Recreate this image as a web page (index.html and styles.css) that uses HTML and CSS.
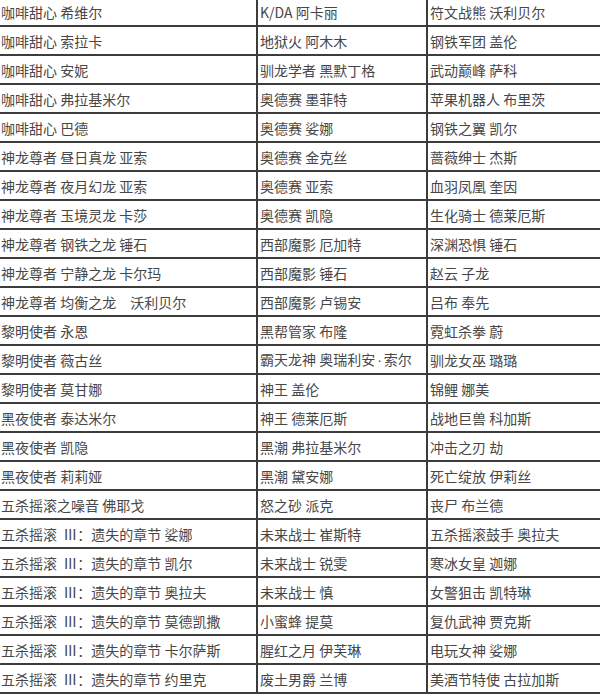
FILE: index.html
```html
<!DOCTYPE html>
<html lang="zh">
<head>
<meta charset="utf-8">
<title>皮肤列表</title>
<link rel="stylesheet" href="styles.css">
</head>
<body>
<table class="skins">
<colgroup><col class="c1"><col class="c2"><col class="c3"></colgroup>
<tbody>
<tr><td>咖啡甜心 希维尔</td><td>K/DA 阿卡丽</td><td>符文战熊 沃利贝尔</td></tr>
<tr><td>咖啡甜心 索拉卡</td><td>地狱火 阿木木</td><td>钢铁军团 盖伦</td></tr>
<tr><td>咖啡甜心 安妮</td><td>驯龙学者 黑默丁格</td><td>武动巅峰 萨科</td></tr>
<tr><td>咖啡甜心 弗拉基米尔</td><td>奥德赛 墨菲特</td><td>苹果机器人 布里茨</td></tr>
<tr><td>咖啡甜心 巴德</td><td>奥德赛 娑娜</td><td>钢铁之翼 凯尔</td></tr>
<tr><td>神龙尊者 昼日真龙 亚索</td><td>奥德赛 金克丝</td><td>蔷薇绅士 杰斯</td></tr>
<tr><td>神龙尊者 夜月幻龙 亚索</td><td>奥德赛 亚索</td><td>血羽凤凰 奎因</td></tr>
<tr><td>神龙尊者 玉境灵龙 卡莎</td><td>奥德赛 凯隐</td><td>生化骑士 德莱厄斯</td></tr>
<tr><td>神龙尊者 钢铁之龙 锤石</td><td>西部魔影 厄加特</td><td>深渊恐惧 锤石</td></tr>
<tr><td>神龙尊者 宁静之龙 卡尔玛</td><td>西部魔影 锤石</td><td>赵云 子龙</td></tr>
<tr><td>神龙尊者 均衡之龙　沃利贝尔</td><td>西部魔影 卢锡安</td><td>吕布 奉先</td></tr>
<tr><td>黎明使者 永恩</td><td>黑帮管家 布隆</td><td>霓虹杀拳 蔚</td></tr>
<tr><td>黎明使者 薇古丝</td><td>霸天龙神 奥瑞利安<span class="dot">·</span>索尔</td><td>驯龙女巫 璐璐</td></tr>
<tr><td>黎明使者 莫甘娜</td><td>神王 盖伦</td><td>锦鲤 娜美</td></tr>
<tr><td>黑夜使者 泰达米尔</td><td>神王 德莱厄斯</td><td>战地巨兽 科加斯</td></tr>
<tr><td>黑夜使者 凯隐</td><td>黑潮 弗拉基米尔</td><td>冲击之刃 劫</td></tr>
<tr><td>黑夜使者 莉莉娅</td><td>黑潮 黛安娜</td><td>死亡绽放 伊莉丝</td></tr>
<tr><td>五杀摇滚之噪音 佛耶戈</td><td>怒之砂 派克</td><td>丧尸 布兰德</td></tr>
<tr><td>五杀摇滚 &nbsp;Ⅲ：遗失的章节 娑娜</td><td>未来战士 崔斯特</td><td>五杀摇滚鼓手 奥拉夫</td></tr>
<tr><td>五杀摇滚 &nbsp;Ⅲ：遗失的章节 凯尔</td><td>未来战士 锐雯</td><td>寒冰女皇 迦娜</td></tr>
<tr><td>五杀摇滚 &nbsp;Ⅲ：遗失的章节 奥拉夫</td><td>未来战士 慎</td><td>女警狙击 凯特琳</td></tr>
<tr><td>五杀摇滚 &nbsp;Ⅲ：遗失的章节 莫德凯撒</td><td>小蜜蜂 提莫</td><td>复仇武神 贾克斯</td></tr>
<tr><td>五杀摇滚 &nbsp;Ⅲ：遗失的章节 卡尔萨斯</td><td>腥红之月 伊芙琳</td><td>电玩女神 娑娜</td></tr>
<tr><td>五杀摇滚 &nbsp;Ⅲ：遗失的章节 约里克</td><td>废土男爵 兰博</td><td>美酒节特使 古拉加斯</td></tr>
</tbody>
</table>
</body>
</html>
```
FILE: styles.css
```css
html, body {
  margin: 0;
  padding: 0;
  background: #ffffff;
  overflow: hidden;
}

.skins {
  border-collapse: collapse;
  table-layout: fixed;
  width: 604px;
  margin: -4px 0 0 -3px;
  font-family: "Noto Sans CJK SC", "Noto Sans", sans-serif;
  font-size: 14px;
  color: #474747;
}

.skins .c1 { width: 259px; }
.skins .c2 { width: 170px; }
.skins .c3 { width: 175px; }

.skins td {
  border: 2px solid #3c3c3c;
  height: 27px;
  padding: 0 0 0 2px;
  line-height: 20px;
  white-space: nowrap;
  overflow: hidden;
  vertical-align: middle;
}

.skins .dot {
  font-family: "Liberation Sans", sans-serif;
  padding: 0 2px;
}
```
